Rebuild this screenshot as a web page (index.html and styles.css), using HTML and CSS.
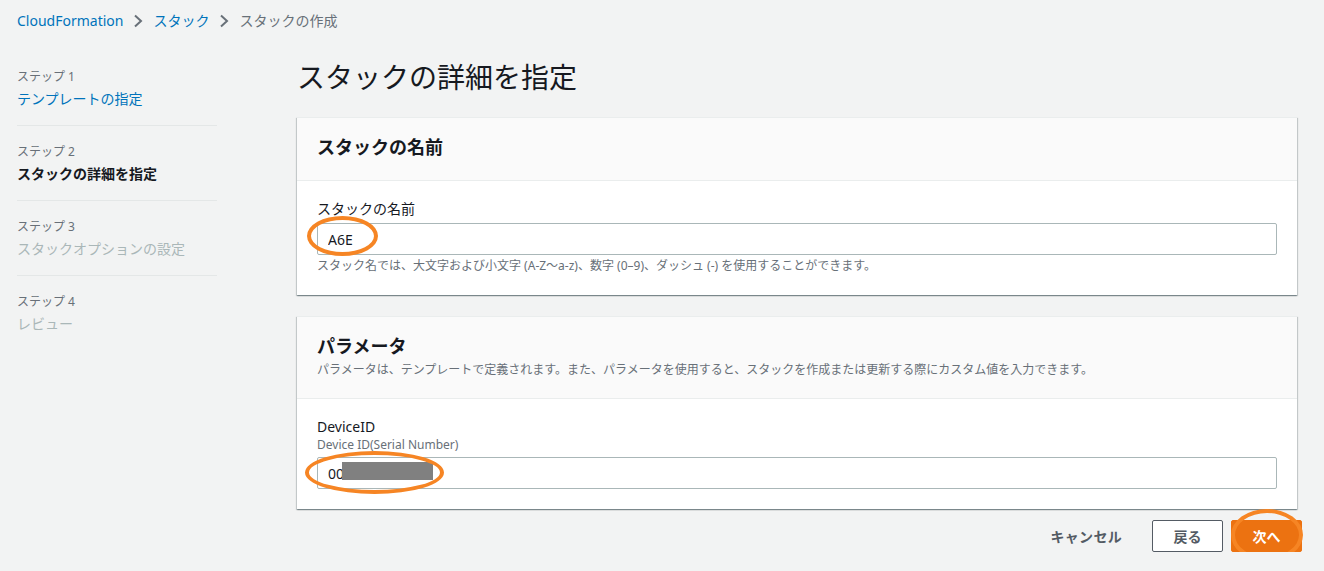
FILE: index.html
```html
<!DOCTYPE html>
<html lang="ja">
<head>
    <meta charset="UTF-8">
    <meta name="viewport" content="width=device-width, initial-scale=1.0">
    <title>スタックの作成 - CloudFormation</title>
    <link rel="stylesheet" href="styles.css">
</head>
<body>
    <div class="breadcrumb">
        <a href="#">CloudFormation</a>
        <svg class="chevron" width="10" height="14" viewBox="0 0 10 14"><path d="M2 1.5 L8 7 L2 12.5" fill="none" stroke="#687078" stroke-width="2"/></svg>
        <a href="#">スタック</a>
        <svg class="chevron" width="10" height="14" viewBox="0 0 10 14"><path d="M2 1.5 L8 7 L2 12.5" fill="none" stroke="#687078" stroke-width="2"/></svg>
        <span class="current">スタックの作成</span>
    </div>

    <div class="page">
        <nav class="steps">
            <div class="step">
                <div class="step-num">ステップ 1</div>
                <a class="step-title link" href="#">テンプレートの指定</a>
            </div>
            <div class="step">
                <div class="step-num">ステップ 2</div>
                <div class="step-title active">スタックの詳細を指定</div>
            </div>
            <div class="step">
                <div class="step-num">ステップ 3</div>
                <div class="step-title disabled">スタックオプションの設定</div>
            </div>
            <div class="step">
                <div class="step-num">ステップ 4</div>
                <div class="step-title disabled">レビュー</div>
            </div>
        </nav>

        <main class="content">
            <h1>スタックの詳細を指定</h1>

            <section class="panel">
                <div class="panel-header">
                    <h2>スタックの名前</h2>
                </div>
                <div class="panel-body">
                    <label class="field-label">スタックの名前</label>
                    <div class="input-wrap">
                        <input class="text-input" type="text" value="A6E">
                        <span class="mark mark-name"></span>
                    </div>
                    <p class="hint">スタック名では、大文字および小文字 (A-Z〜a-z)、数字 (0–9)、ダッシュ (-) を使用することができます。</p>
                </div>
            </section>

            <section class="panel">
                <div class="panel-header with-desc">
                    <h2>パラメータ</h2>
                    <p class="panel-desc">パラメータは、テンプレートで定義されます。また、パラメータを使用すると、スタックを作成または更新する際にカスタム値を入力できます。</p>
                </div>
                <div class="panel-body">
                    <label class="field-label">DeviceID</label>
                    <p class="field-desc">Device ID(Serial Number)</p>
                    <div class="input-wrap">
                        <input class="text-input" type="text" value="00">
                        <span class="redacted"></span>
                        <span class="mark mark-device"></span>
                    </div>
                </div>
            </section>

            <div class="actions">
                <button class="btn-link">キャンセル</button>
                <button class="btn">戻る</button>
                <button class="btn btn-primary">次へ<span class="mark mark-next"></span></button>
            </div>
        </main>
    </div>
</body>
</html>
```

FILE: styles.css
```css
*, *::before, *::after {
    box-sizing: border-box;
}
body {
    margin: 0;
    padding: 0;
    background: #f2f3f3;
    color: #16191f;
    font-family: "Noto Sans", "Noto Sans CJK JP", sans-serif;
    font-size: 14px;
}

.breadcrumb {
    display: flex;
    align-items: center;
    gap: 10px;
    padding: 12px 17px;
    line-height: 18px;
    font-size: 14px;
}
.breadcrumb a {
    color: #0073bb;
    text-decoration: none;
}
.breadcrumb .current {
    color: #687078;
}

.page {
    display: flex;
    padding-left: 17px;
}

.steps {
    width: 200px;
    margin-right: 80px;
    padding-top: 9px;
}
.step {
    padding: 16px 0 15px;
    border-bottom: 1px solid #e4e7e7;
}
.step:last-child {
    border-bottom: none;
}
.step-num {
    font-size: 12px;
    line-height: 20px;
    color: #687078;
}
.step-title {
    display: block;
    margin-top: 1px;
    line-height: 22px;
    font-size: 14px;
}
.step-title.link {
    color: #0073bb;
    text-decoration: none;
}
.step-title.active {
    font-weight: bold;
    color: #16191f;
}
.step-title.disabled {
    color: #aab7b8;
}

.content {
    width: 1000px;
}
h1 {
    margin: 17px 0 22px;
    font-size: 28px;
    line-height: 36px;
    font-weight: normal;
    color: #16191f;
}

.panel {
    background: #fff;
    margin-bottom: 21px;
    box-shadow: 0 1px 1px 0 rgba(0, 28, 36, 0.3), 1px 1px 1px 0 rgba(0, 28, 36, 0.15), -1px 1px 1px 0 rgba(0, 28, 36, 0.15);
    border-top: 1px solid #eaeded;
}
.panel-header {
    background: #fafafa;
    padding: 18px 20px 22px;
    border-bottom: 1px solid #eaeded;
}
.panel-header.with-desc {
    padding-bottom: 20px;
}
.panel-header h2 {
    margin: 0;
    font-size: 18px;
    line-height: 22px;
    font-weight: bold;
}
.panel-desc {
    margin: 5px 0 0;
    font-size: 12px;
    line-height: 16px;
    color: #687078;
}
.panel-body {
    padding: 18px 20px 20px;
}
.field-label {
    display: block;
    line-height: 20px;
    font-size: 14px;
    color: #16191f;
}
.field-desc {
    margin: 0;
    font-size: 12px;
    line-height: 16px;
    color: #687078;
}
.input-wrap {
    position: relative;
    margin-top: 4px;
}
.text-input {
    display: block;
    width: 100%;
    height: 32px;
    padding: 0 10px;
    border: 1px solid #aab7b8;
    border-radius: 2px;
    background: #fff;
    font-family: inherit;
    font-size: 14px;
    color: #16191f;
    outline: none;
}
.hint {
    margin: 3px 0 1px;
    font-size: 12px;
    line-height: 16px;
    color: #687078;
}
.redacted {
    position: absolute;
    left: 25px;
    top: 5px;
    width: 91px;
    height: 18px;
    background: #808080;
}

/* orange hand-drawn annotation rings */
.mark {
    position: absolute;
    border: 4px solid #f68524;
    border-radius: 50%;
    pointer-events: none;
}
.mark-name {
    left: -10px;
    top: -7px;
    width: 71px;
    height: 40px;
}
.mark-device {
    left: -12px;
    top: -6px;
    width: 139px;
    height: 43px;
}
.mark-next {
    left: -1px;
    top: -12px;
    width: 72px;
    height: 52px;
}

.actions {
    display: flex;
    justify-content: flex-end;
    align-items: center;
    margin-top: -10px;
    margin-right: -5px;
}
.actions button {
    font-family: inherit;
    font-size: 14px;
    font-weight: bold;
    cursor: pointer;
}
.btn-link {
    border: none;
    background: none;
    color: #545b64;
    padding: 0;
    margin-right: 22px;
    letter-spacing: 0.3px;
}
.btn {
    height: 32px;
    width: 71px;
    border: 1px solid #545b64;
    border-radius: 2px;
    background: #fff;
    color: #545b64;
    margin-left: 8px;
}
.btn-primary {
    position: relative;
    width: 71px;
    border-color: #ec7211;
    background: #ec7211;
    color: #fff;
}
```
